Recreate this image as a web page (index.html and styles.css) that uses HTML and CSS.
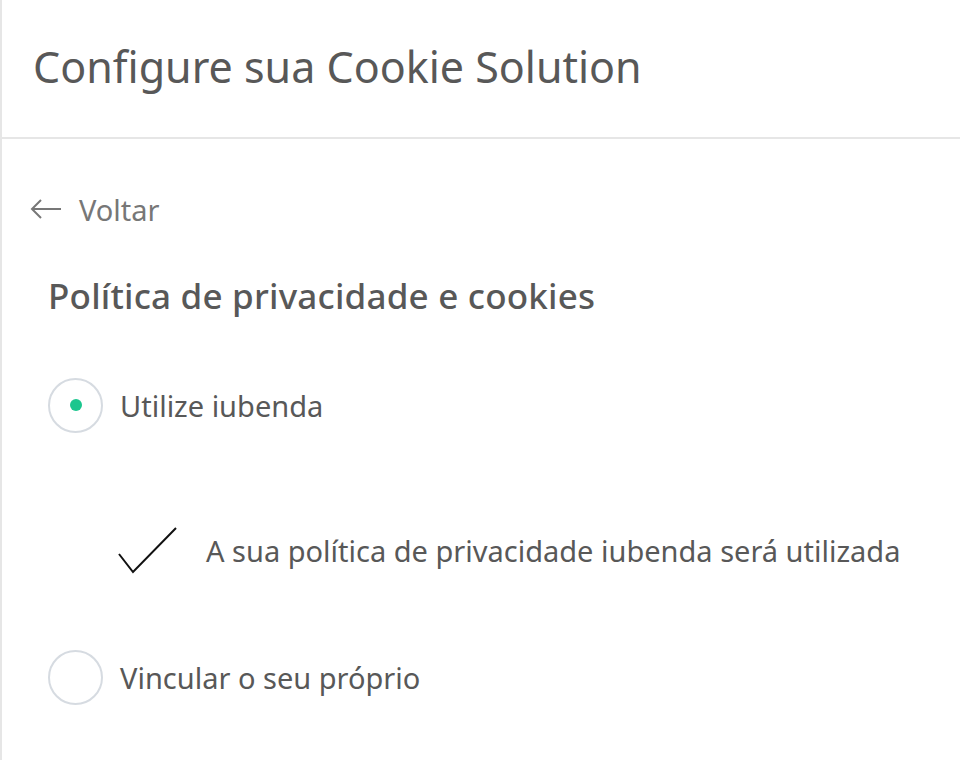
FILE: index.html
```html
<!DOCTYPE html>
<html lang="pt">
<head>
<meta charset="utf-8">
<title>Configure sua Cookie Solution</title>
<link rel="stylesheet" href="styles.css">
</head>
<body>
<div class="panel">
  <header class="header">
    <h1 class="title">Configure sua Cookie Solution</h1>
  </header>
  <main class="content">
    <a class="back" href="#">
      <svg class="back-icon" width="32" height="20" viewBox="0 0 32 20" aria-hidden="true">
        <path d="M31 10H2M11 1L2 10l9 9" fill="none" stroke="#777" stroke-width="2"/>
      </svg>
      <span>Voltar</span>
    </a>
    <h2 class="section-title">Política de privacidade e cookies</h2>
    <div class="options">
      <label class="option">
        <span class="radio radio-checked"><span class="radio-dot"></span></span>
        <span class="option-label">Utilize iubenda</span>
      </label>
      <div class="note">
        <svg class="check" width="60" height="48" viewBox="0 0 60 48" aria-hidden="true">
          <path d="M1 28L15 46L58 2" fill="none" stroke="#111" stroke-width="2"/>
        </svg>
        <span class="note-text">A sua política de privacidade iubenda será utilizada</span>
      </div>
      <label class="option">
        <span class="radio"></span>
        <span class="option-label">Vincular o seu próprio</span>
      </label>
    </div>
  </main>
</div>
</body>
</html>
```

FILE: styles.css
```css
html, body {
  margin: 0;
  padding: 0;
  background: #fff;
}
body {
  font-family: "Noto Sans", "Open Sans", sans-serif;
  color: #585858;
}
.panel {
  border-left: 2px solid #e6e6e6;
  min-height: 760px;
  box-sizing: border-box;
}
.header {
  height: 137px;
  border-bottom: 2px solid #e6e6e6;
  display: flex;
  align-items: center;
  padding-left: 31px;
}
.title {
  margin: 0 0 4px;
  font-size: 43px;
  font-weight: 400;
  color: #585858;
  line-height: 1.2;
}
.content {
  padding: 48px 0 0 28px;
}
.back {
  display: flex;
  align-items: center;
  gap: 17px;
  text-decoration: none;
  color: #777;
  font-size: 29px;
  height: 44px;
}
.section-title {
  margin: 41px 0 0 18px;
  font-size: 35px;
  font-weight: 500;
  line-height: 48px;
  letter-spacing: 0.2px;
  color: #585858;
}
.options {
  margin: 57px 0 0 18px;
}
.option {
  display: flex;
  align-items: center;
  gap: 17px;
  height: 56px;
}
.radio {
  width: 51px;
  height: 51px;
  border: 2px solid #d6dbe1;
  border-radius: 50%;
  display: flex;
  align-items: center;
  justify-content: center;
  flex: none;
}
.radio-dot {
  width: 12px;
  height: 12px;
  border-radius: 50%;
  background: #1bc68e;
}
.option-label {
  font-size: 29px;
  color: #585858;
}
.note {
  display: flex;
  align-items: center;
  gap: 28px;
  height: 48px;
  margin: 93px 0 75px 70px;
}
.check {
  flex: none;
}
.note-text {
  font-size: 29px;
  color: #585858;
}
```
